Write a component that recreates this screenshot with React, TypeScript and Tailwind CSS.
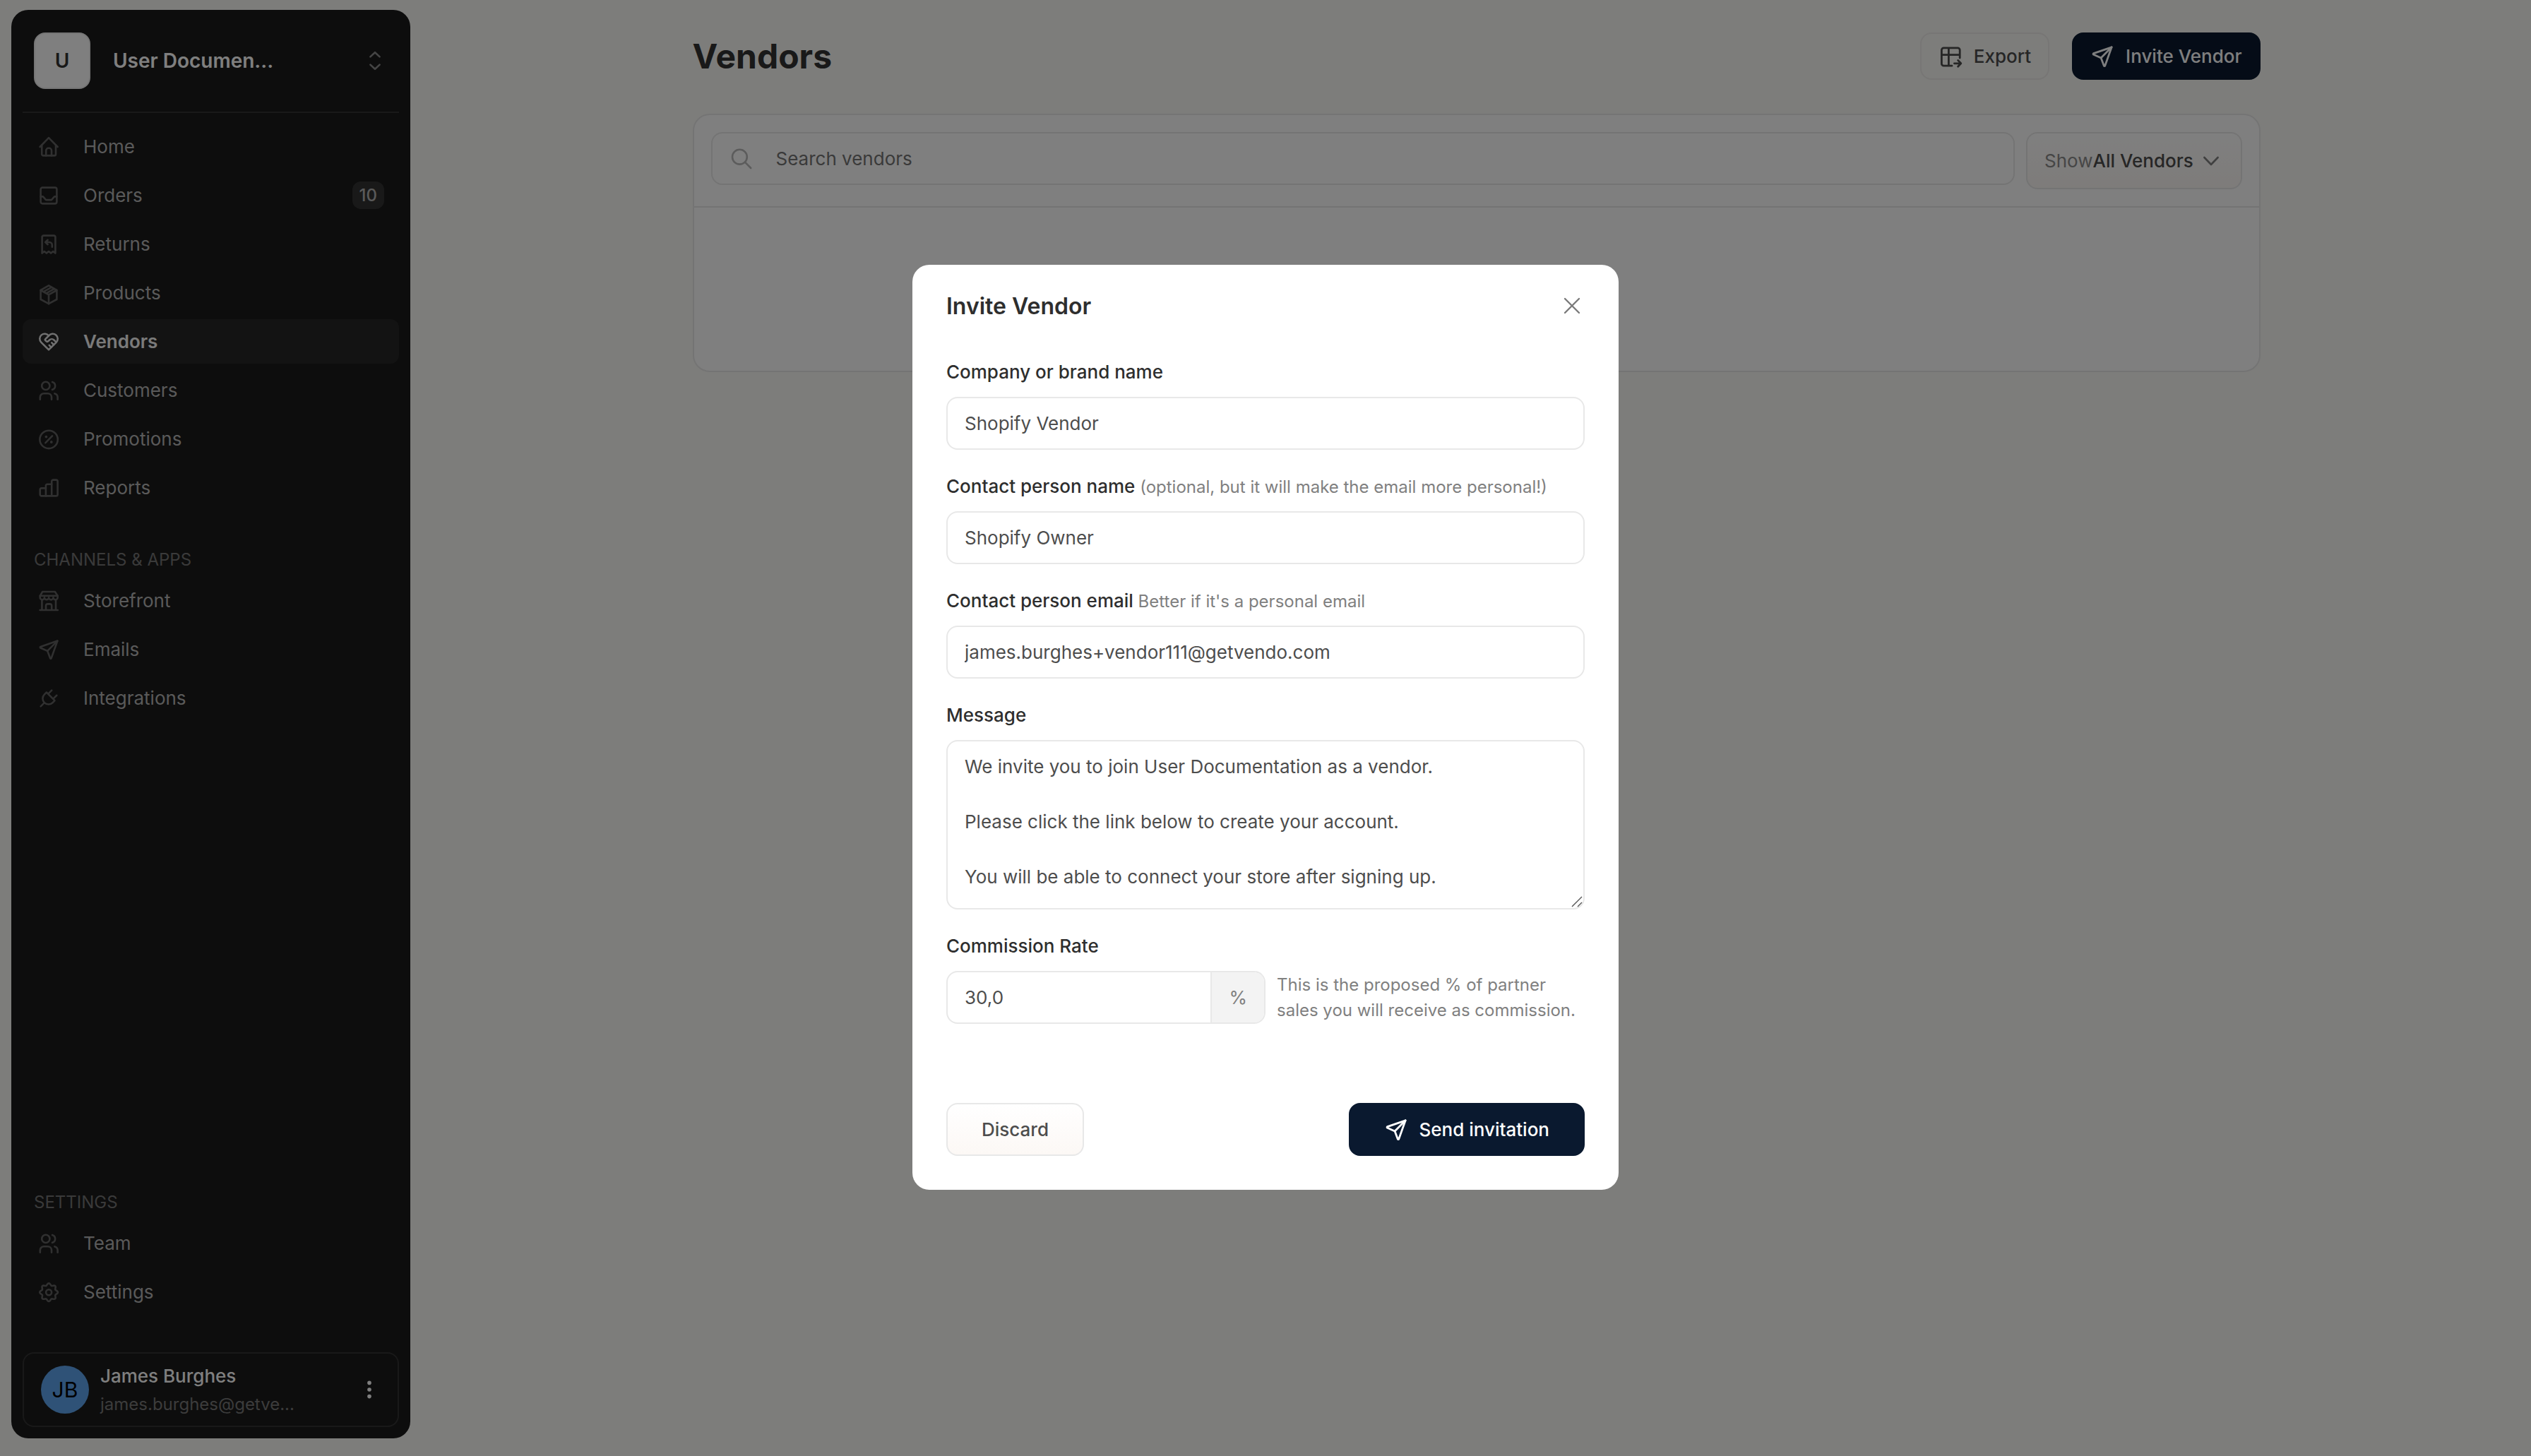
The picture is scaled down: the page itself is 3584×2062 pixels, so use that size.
import React from "react";

type IconProps = { className?: string };

function Glyph({
  className = "size-8",
  box = "0 0 32 32",
  width = 2.6,
  children,
}: {
  className?: string;
  box?: string;
  width?: number;
  children: React.ReactNode;
}) {
  return (
    <svg
      aria-hidden="true"
      viewBox={box}
      fill="none"
      stroke="currentColor"
      strokeWidth={width}
      strokeLinecap="round"
      strokeLinejoin="round"
      className={`shrink-0 overflow-visible ${className}`}
    >
      {children}
    </svg>
  );
}

const HomeIcon = () => (
  <Glyph>
    <path d="M3.6 16 16 3.2 28.6 16" />
    <path d="M6.2 13.6v12.6a2.2 2.2 0 0 0 2.2 2.2h15.4a2.2 2.2 0 0 0 2.2-2.2V13.6" />
    <path d="M12.2 28.4v-7.2a3.4 3.4 0 0 1 3.4-3.4h1a3.4 3.4 0 0 1 3.4 3.4v7.2" />
  </Glyph>
);
const InboxIcon = () => (
  <Glyph>
    <rect x="4.6" y="4.6" width="22.8" height="22.8" rx="2.6" />
    <path d="M4.6 17.4h2.6c.6 0 1 .2 1.4.7l2.8 3.3c.4.5.8.7 1.4.7h6.4c.6 0 1-.2 1.4-.7l2.8-3.3c.4-.5.8-.7 1.4-.7h2.6" />
  </Glyph>
);
const ReturnIcon = () => (
  <Glyph>
    <path d="M6.6 28.6V6a2.4 2.4 0 0 1 2.4-2.4h14A2.4 2.4 0 0 1 25.4 6v22.6L22.2 26l-3.1 2.6L16 26l-3.1 2.6L9.8 26z" />
    <path d="M14.6 9.8 11.2 13l3.4 3.2M11.2 13h5.6a4 4 0 0 1 4 4v2.8" />
  </Glyph>
);
const BoxIcon = () => (
  <Glyph>
    <path d="M16 5.4 27.4 12v13L16 31.2 4.6 25V12z" />
    <path d="M4.6 12 16 18.4 27.4 12M16 18.4v12.8M8.6 14.2 20 7.8M12.6 16.4 23.8 10" />
  </Glyph>
);
const HeartHandshakeIcon = () => (
  <Glyph box="0.7 0.7 22.6 22.6" width={1.8}>
    <path d="M19.5 12.572 12 20l-7.5-7.428A5 5 0 1 1 12 6.006a5 5 0 1 1 7.5 6.572" />
    <path d="M12 6 8.707 9.293a1 1 0 0 0 0 1.414l.543.543c.69.69 1.81.69 2.5 0l1-1a3.182 3.182 0 0 1 4.5 0l2.25 2.25M12.5 15.5l2 2M15 13l2 2" />
  </Glyph>
);
const UsersIcon = () => (
  <Glyph>
    <circle cx="11.8" cy="9.4" r="5.6" />
    <path d="M3.8 28.8v-3.2a5.4 5.4 0 0 1 5.4-5.4h5.4a5.4 5.4 0 0 1 5.4 5.4v3.2M21 4a5.6 5.6 0 0 1 0 10.8M28.6 28.8v-3.2a5.4 5.4 0 0 0-4.2-5.2" />
  </Glyph>
);
const PercentIcon = () => (
  <Glyph>
    <circle cx="16.1" cy="16.4" r="12.7" />
    <path d="m11.4 21.2 9.6-9.8" />
    <circle cx="12.4" cy="12.6" r="1.2" fill="currentColor" strokeWidth="1.4" />
    <circle cx="19.8" cy="20" r="1.2" fill="currentColor" strokeWidth="1.4" />
  </Glyph>
);
const BarsIcon = () => (
  <Glyph>
    <path d="M20.2 27.4V6.8a2.2 2.2 0 0 1 2.2-2.2h4a2.2 2.2 0 0 1 2.2 2.2v18.4a2.2 2.2 0 0 1-2.2 2.2H5.9a2.2 2.2 0 0 1-2.2-2.2V18.6a2.2 2.2 0 0 1 2.2-2.2h6" />
    <path d="M11.9 27.4V13a2.2 2.2 0 0 1 2.2-2.2h6" />
  </Glyph>
);
const StoreIcon = () => (
  <Glyph>
    <path d="M7.2 3h17.6l3.8 5.8v2.4a3.1 3.1 0 0 1-6.2 0 3.1 3.1 0 0 1-6.3 0 3.1 3.1 0 0 1-6.2 0 3.1 3.1 0 0 1-6.2 0V8.8z" />
    <path d="M3.8 8.8h24.8M6.4 15v14M26 15v14M3.6 29h25.2M12 29v-6a2.6 2.6 0 0 1 2.6-2.6h3a2.6 2.6 0 0 1 2.6 2.6v6" />
  </Glyph>
);
const PlaneIcon = ({ className }: IconProps) => (
  <Glyph className={className}>
    <path d="M28.4 3.6 4.4 11.9c-.8.3-.8 1.2-.1 1.6l9.9 4.4 3.9 10.4c.3.8 1.2.8 1.5 0z" />
    <path d="M28.4 3.6 14.2 17.9" />
  </Glyph>
);
const PlugIcon = () => (
  <Glyph box="0.7 0.7 22.6 22.6" width={1.8}>
    <path d="M9.785 6 18 14.215l-2.054 2.054a5.81 5.81 0 1 1-8.215-8.215zM4 20l3.5-3.5M15 4l-3.5 3.5M20 9l-3.5 3.5" />
  </Glyph>
);

const gearOutline =
  Array.from({ length: 96 }, (_, i) => {
    const a = (i / 96) * Math.PI * 2;
    const r = 11.4 + 1.4 * Math.cos(8 * a);
    const x = 16.1 + r * Math.sin(a);
    const y = 16.2 - r * Math.cos(a);
    return `${i === 0 ? "M" : "L"}${x.toFixed(2)} ${y.toFixed(2)}`;
  }).join("") + "Z";
const GearIcon = () => (
  <Glyph>
    <path d={gearOutline} />
    <circle cx="16.1" cy="16.2" r="4" />
  </Glyph>
);
const SortIcon = () => (
  <Glyph>
    <path d="M9.4 10.4 16 4.2l6.6 6.2M9.4 21.6 16 27.8l6.6-6.2" />
  </Glyph>
);
const ExportIcon = () => (
  <Glyph className="size-8.5" box="0 0 34 34" width={2.8}>
    <path d="M19 30.2H7.4a3 3 0 0 1-3-3V7.8a3 3 0 0 1 3-3h19.8a3 3 0 0 1 3 3v11.2M4.4 14.6h25.8M14.4 4.8v25.4M22.4 26.8h9.2M27.6 22.4l4.2 4.4-4.2 4.4" />
  </Glyph>
);
const SearchIcon = () => (
  <Glyph>
    <circle cx="13.4" cy="13.2" r="10.4" />
    <path d="m20.9 20.7 8.3 8.3" />
  </Glyph>
);
const ChevronDownIcon = () => (
  <Glyph className="size-6" box="0 0 24 24">
    <path d="m2.4 7 9.600 10 9.600-10" />
  </Glyph>
);

type Item = { label: string; icon: () => React.JSX.Element; badge?: string; active?: boolean };

const mainItems: Item[] = [
  { label: "Home", icon: HomeIcon },
  { label: "Orders", icon: InboxIcon, badge: "10" },
  { label: "Returns", icon: ReturnIcon },
  { label: "Products", icon: BoxIcon },
  { label: "Vendors", icon: HeartHandshakeIcon, active: true },
  { label: "Customers", icon: UsersIcon },
  { label: "Promotions", icon: PercentIcon },
  { label: "Reports", icon: BarsIcon },
];
const channelItems: Item[] = [
  { label: "Storefront", icon: StoreIcon },
  { label: "Emails", icon: () => <PlaneIcon /> },
  { label: "Integrations", icon: PlugIcon },
];
const settingsItems: Item[] = [
  { label: "Team", icon: UsersIcon },
  { label: "Settings", icon: GearIcon },
];

function NavList({ items }: { items: Item[] }) {
  return (
    <ul className="flex flex-col gap-1.5">
      {items.map(({ label, icon: Icon, badge, active }) => (
        <li key={label}>
          <a
            href="#"
            aria-current={active ? "page" : undefined}
            className={
              active
                ? "flex items-center gap-[33px] rounded-xl bg-[#262626] px-[21px] py-3 font-semibold text-[#f5f5f5]"
                : "flex items-center gap-[33px] rounded-xl px-[21px] py-3 text-[#b4b4b4]"
            }
          >
            <span className={active ? "text-[#e0e0e0]" : "text-[#606060]"}>
              <Icon />
            </span>
            <span className="flex-1">{label}</span>
            {badge && (
              <span className="rounded-xl bg-[#333333] px-2.5 text-[24px] font-medium">{badge}</span>
            )}
          </a>
        </li>
      ))}
    </ul>
  );
}

function SectionTitle({ children }: { children: React.ReactNode }) {
  return <h2 className="mb-2 px-4 text-[24px] leading-9 text-[#757575]">{children}</h2>;
}

function Sidebar() {
  return (
    <aside className="flex w-[565px] shrink-0 flex-col rounded-3xl bg-[#1a1a1a] p-4">
      <button
        type="button"
        className="flex items-center gap-8 border-b-2 border-[#333333] px-4 pt-4 pb-8 text-left"
      >
        <span className="flex size-20 shrink-0 items-center justify-center rounded-2xl border-2 border-[#ececec] bg-white text-[28px] font-semibold text-[#333333]">
          U
        </span>
        <span className="flex-1 text-[28px] font-semibold text-white">User Documen...</span>
        <span className="pr-0.5 text-[#8a8a8a]">
          <SortIcon />
        </span>
      </button>
      <nav aria-label="Main" className="flex flex-1 flex-col pt-4">
        <NavList items={mainItems} />
        <div className="pt-[53px]">
          <SectionTitle>CHANNELS &amp; APPS</SectionTitle>
          <NavList items={channelItems} />
        </div>
        <div className="mt-auto pb-[54px]">
          <SectionTitle>SETTINGS</SectionTitle>
          <NavList items={settingsItems} />
        </div>
      </nav>
      <div className="flex items-center gap-4 rounded-2xl border-2 border-[#333333] px-6 py-3">
        <span className="flex size-[68px] shrink-0 items-center justify-center rounded-full bg-[#5ea5ee] text-[30px] text-black">
          JB
        </span>
        <div className="flex min-w-0 flex-1 flex-col gap-[3px]">
          <div className="font-medium text-white">James Burghes</div>
          <div className="text-[24px] leading-9 text-[#787878]">james.burghes@getve...</div>
        </div>
        <button type="button" aria-label="Account menu" className="text-white">
          <svg aria-hidden="true" viewBox="0 0 32 32" fill="currentColor" className="size-8">
            <circle cx="16" cy="6.4" r="2.8" />
            <circle cx="16" cy="16" r="2.8" />
            <circle cx="16" cy="25.6" r="2.8" />
          </svg>
        </button>
      </div>
    </aside>
  );
}

function VendorsPage() {
  return (
    <main className="min-w-0 flex-1 pt-8">
      <div className="mx-auto max-w-[2220px]">
        <header className="flex items-center justify-between">
          <h1 className="text-[48px] leading-[66px] font-bold text-[#333333]">Vendors</h1>
          <div className="flex gap-8">
            <button
              type="button"
              className="flex items-center gap-4 rounded-2xl border-2 border-[#eeedea] px-6 py-3 font-medium text-[#4d4d4d]"
            >
              <ExportIcon />
              Export
            </button>
            <button
              type="button"
              className="flex items-center gap-4 rounded-2xl border-2 border-[#0a192f] bg-[#0a192f] px-6 py-3 font-medium text-white"
            >
              <PlaneIcon className="size-8.5" />
              Invite Vendor
            </button>
          </div>
        </header>
        <section className="mt-12 rounded-3xl border-2 border-[#e8e8e8] bg-white">
          <div className="flex items-start gap-4 border-b-2 border-[#e8e8e8] p-6">
            <label className="flex flex-1 items-center gap-[33px] rounded-2xl border-2 border-[#e8e8e8] px-[25px] py-4 text-[#b8b8b8]">
              <SearchIcon />
              <input
                type="search"
                aria-label="Search vendors"
                placeholder="Search vendors"
                className="min-w-0 flex-1 bg-transparent text-[#808080] outline-none placeholder:text-[#757575]"
              />
            </label>
            <label className="flex items-center rounded-2xl border-2 border-[#e8e8e8] bg-linear-to-b from-white to-[#fcf8f5] py-[19px] pr-[30px] pl-6 text-[#8c8c8c]">
              Show
              <select className="appearance-none bg-transparent font-medium text-[#4d4d4d] outline-none">
                <option>All Vendors</option>
              </select>
              <span className="pl-3 text-[#808080]">
                <ChevronDownIcon />
              </span>
            </label>
          </div>
          <div className="h-[231px]" />
        </section>
      </div>
    </main>
  );
}

const fieldClass =
  "w-full rounded-2xl border-2 border-[#e8e8e8] bg-white px-6 py-4 text-[#4d4d4d] outline-none";

function Field({
  id,
  label,
  hint,
  children,
}: {
  id: string;
  label: string;
  hint?: string;
  children: React.ReactNode;
}) {
  return (
    <div className="flex flex-col gap-4">
      <label htmlFor={id} className="font-medium text-[#2e2e2e]">
        {label}
        {hint && <span className="text-[24px] leading-none font-normal text-[#808080]"> {hint}</span>}
      </label>
      {children}
    </div>
  );
}

const message = `We invite you to join User Documentation as a vendor.

Please click the link below to create your account.

You will be able to connect your store after signing up.`;

function InviteDialog() {
  return (
    <div className="fixed inset-0 flex items-center justify-center bg-black/50 pb-0.5">
      <form
        role="dialog"
        aria-modal="true"
        aria-labelledby="invite-title"
        className="w-full max-w-[1000px] rounded-3xl bg-white px-12 pb-12"
      >
        <div className="flex h-[116px] items-center justify-between">
          <h2 id="invite-title" className="text-[32px] font-semibold text-[#2e2e2e]">
            Invite Vendor
          </h2>
          <button type="button" aria-label="Close" className="text-[#7a7a7a]">
            <Glyph className="size-9" box="0 0 36 36" width={2.4}>
              <path d="m8 8 20 20M28 8 8 28" />
            </Glyph>
          </button>
        </div>
        <div className="flex flex-col gap-8 pt-4">
          <Field id="company" label="Company or brand name">
            <input id="company" className={fieldClass} defaultValue="Shopify Vendor" />
          </Field>
          <Field
            id="contact"
            label="Contact person name"
            hint="(optional, but it will make the email more personal!)"
          >
            <input id="contact" className={fieldClass} defaultValue="Shopify Owner" />
          </Field>
          <Field id="email" label="Contact person email" hint="Better if it's a personal email">
            <input
              id="email"
              type="email"
              className={fieldClass}
              defaultValue="james.burghes+vendor111@getvendo.com"
            />
          </Field>
          <Field id="message" label="Message">
            <div className="relative">
              <textarea
                id="message"
                className={`block h-60 resize-none overflow-hidden ${fieldClass}`}
                defaultValue={message}
              />
              <svg
                aria-hidden="true"
                viewBox="0 0 16 16"
                fill="none"
                stroke="#555555"
                strokeWidth="1.4"
                className="absolute right-[3px] bottom-[3px] size-4"
              >
                <path d="M1 15 15 1M9 15l6-6" />
              </svg>
            </div>
          </Field>
          <Field id="rate" label="Commission Rate">
            <div className="grid grid-cols-2 items-center">
              <div className="flex overflow-hidden rounded-2xl border-2 border-[#e8e8e8]">
                <input
                  id="rate"
                  className="min-w-0 flex-1 py-4 pl-6 text-[#4d4d4d] outline-none"
                  defaultValue="30,0"
                />
                <span className="border-l-2 border-[#e8e8e8] bg-[#f3f3f3] px-6 py-4 text-[#808080]">
                  %
                </span>
              </div>
              <p className="pl-4 text-[24px] leading-9 text-[#808080]">
                This is the proposed % of partner sales you will receive as commission.
              </p>
            </div>
          </Field>
        </div>
        <div className="flex items-center justify-between pt-28">
          <button
            type="button"
            className="rounded-2xl border-2 border-[#e8e8e8] bg-linear-to-b from-white to-[#fcf8f5] px-12 py-4 font-medium text-[#4d4d4d]"
          >
            Discard
          </button>
          <button
            type="submit"
            className="flex items-center gap-4 rounded-2xl border-2 border-[#0a192f] bg-[#0a192f] px-12 py-4 font-medium text-white"
          >
            <PlaneIcon className="size-8.5" />
            Send invitation
          </button>
        </div>
      </form>
    </div>
  );
}

export default function App() {
  return (
    <div className="bg-[#fbfaf6] font-[Inter,sans-serif] text-[26px] leading-[39px]">
      <div className="flex h-screen gap-4 pt-3.5 pb-[25px] pl-4">
        <Sidebar />
        <VendorsPage />
      </div>
      <InviteDialog />
    </div>
  );
}
